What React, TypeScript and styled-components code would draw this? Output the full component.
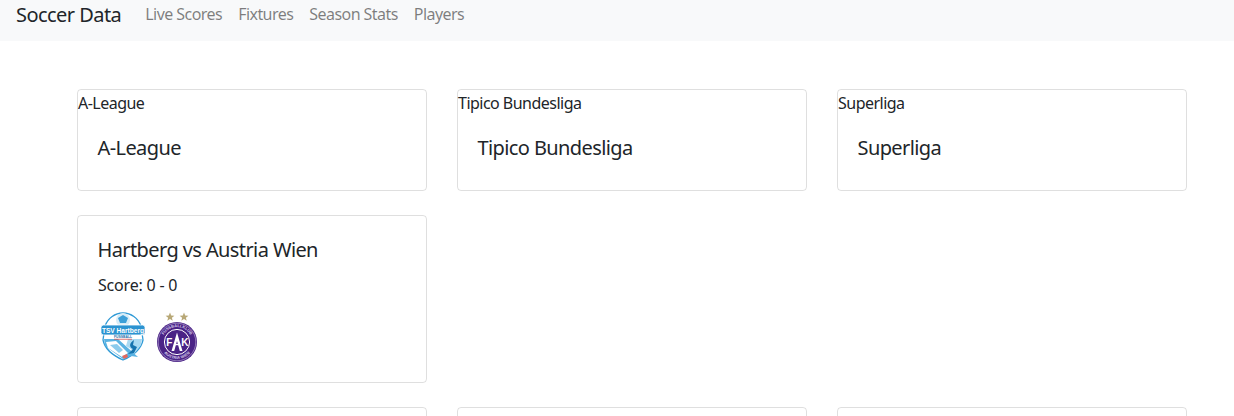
import styled, { createGlobalStyle } from "styled-components";

const GlobalStyle = createGlobalStyle`
  html, body {
    margin: 0;
    height: 416px;
    overflow: hidden;
    background: #fff;
    font-family: "Noto Sans", "Open Sans", sans-serif;
    font-size: 16px;
    line-height: 24px;
    color: #212529;
  }
  * { box-sizing: border-box; }
`;

const NavBar = styled.nav`
  height: 41px;
  background: #f8f9fa;
  padding: 0 16px;
  display: flex;
  align-items: flex-start;
`;

const Brand = styled.a`
  font-size: 20px;
  line-height: 30px;
  letter-spacing: -0.55px;
  margin-right: 16px;
  color: #212529;
`;

const NavLink = styled.a`
  padding: 0 8px;
  line-height: 29px;
  letter-spacing: -0.55px;
  color: rgba(0, 0, 0, 0.5);
`;

const Grid = styled.main`
  display: grid;
  grid-template-columns: repeat(3, 350px);
  column-gap: 30px;
  row-gap: 24px;
  padding: 48px 0 0 77px;
`;

const Card = styled.section`
  border: 1px solid rgba(0, 0, 0, 0.125);
  border-radius: 4px;
  min-height: 60px;
`;

const Filler = styled.div`
  grid-column: span 2;
`;

const AltText = styled.div`
  height: 24px;
  padding-top: 1px;
  letter-spacing: -0.52px;
`;

const CardBody = styled.div`
  padding: 20px;
`;

const CardTitle = styled.h5`
  height: 24px;
  margin: 0 0 12px -0.5px;
  padding-top: 2px;
  font-size: 20px;
  font-weight: 400;
  line-height: 24px;
  letter-spacing: -0.6px;
`;

const Score = styled.p`
  height: 24px;
  margin: 0 0 16px;
  padding-top: 1px;
  letter-spacing: -0.2px;
`;

const Logos = styled.div`
  display: flex;
  gap: 4px;
`;

const Crest = styled.svg`
  width: 50px;
  height: 50px;
  display: block;
`;

function HartbergCrest() {
  return (
    <Crest viewBox="0 0 50 50">
      <path d="M7 14 C10 6 17 1 25 1 C33 1 40 6 43 14 L45 28 C43 38 34 44 25 48 C16 44 7 38 5 28 Z" fill="#fff" stroke="#2f9ad6" strokeWidth="1.3" />
      <circle cx="25" cy="8" r="7" fill="#d7ecf7" />
      <path d="M25 3 L30 6 L28 11 L22 11 L20 6 Z" fill="#3c9fd8" />
      <path d="M6 27 L20 27 L40 45 L33 44 L25 47 L7 34 Z" fill="#59b2e2" />
      <path d="M8 30 L18 29 L30 41 L24 45 L10 36 Z" fill="#fff" />
      <path d="M12 33 L19 32 L25 38 L21 41 Z" fill="#8ccbec" />
      <path d="M30 27 L44 27 L43 33 L36 42 L33 37 L28 34 Z" fill="#a8d9f2" />
      <path d="M36 28 C31 31 31 35 35 37 L30 42 L36 41 L39 35 L35 33 Z" fill="#1673ae" />
      <path d="M24 44 L29 42 L30 45 L26 47 Z" fill="#e2685f" />
      <rect x="3" y="13" width="44" height="10" rx="2.5" fill="#2b93d1" stroke="#fff" strokeWidth="0.8" />
      <text x="25" y="20.6" fontFamily="Liberation Sans, sans-serif" fontSize="6.6" fontWeight="700" fill="#fff" textAnchor="middle">
        TSV Hartberg
      </text>
      <text x="25" y="26.4" fontFamily="Liberation Sans, sans-serif" fontSize="3.4" fontWeight="700" fill="#1d6fa8" textAnchor="middle">
        FUSSBALL
      </text>
      <rect x="16" y="26.8" width="18" height="0.8" fill="#d9534f" />
    </Crest>
  );
}

function AustriaCrest() {
  return (
    <Crest viewBox="0 0 50 50">
      <path d="M18 0.5 L19.2 3.5 L22.4 3.7 L19.9 5.7 L20.7 8.8 L18 7.1 L15.3 8.8 L16.1 5.7 L13.6 3.7 L16.8 3.5 Z" fill="#b8a877" />
      <path d="M32 0.5 L33.2 3.5 L36.4 3.7 L33.9 5.7 L34.7 8.8 L32 7.1 L29.3 8.8 L30.1 5.7 L27.6 3.7 L30.8 3.5 Z" fill="#b8a877" />
      <defs>
        <path id="fak-top" d="M10 30 A15 15 0 0 1 40 30" />
        <path id="fak-bottom" d="M8 30 A17 17 0 0 0 42 30" />
      </defs>
      <circle cx="25" cy="30" r="20" fill="#4a2386" />
      <circle cx="25" cy="30" r="18.8" fill="none" stroke="#d9cfea" strokeWidth="0.5" />
      <text fontFamily="Liberation Sans, sans-serif" fontSize="4" fontWeight="700" fill="#d8cdea" textAnchor="middle">
        <textPath href="#fak-top" startOffset="50%">FUSSBALLKLUB</textPath>
      </text>
      <text fontFamily="Liberation Sans, sans-serif" fontSize="4" fontWeight="700" fill="#d8cdea" textAnchor="middle">
        <textPath href="#fak-bottom" startOffset="50%">AUSTRIA WIEN</textPath>
      </text>
      <circle cx="25" cy="30" r="12.6" fill="#4a2386" stroke="#fff" strokeWidth="1" />
      <path d="M25 20.5 L30.5 39 H27.8 L25 29 L22.2 39 H19.5 Z" fill="#fff" />
      <rect x="22.5" y="32" width="5" height="1.2" fill="#fff" />
      <text x="17.4" y="34" fontFamily="Liberation Sans, sans-serif" fontSize="10" fontWeight="700" fill="#fff" textAnchor="middle">F</text>
      <text x="32.8" y="34" fontFamily="Liberation Sans, sans-serif" fontSize="10" fontWeight="700" fill="#fff" textAnchor="middle">K</text>
    </Crest>
  );
}

const leagues = ["A-League", "Tipico Bundesliga", "Superliga"];

export default function App() {
  return (
    <>
      <GlobalStyle />
      <NavBar>
        <Brand>Soccer Data</Brand>
        <NavLink>Live Scores</NavLink>
        <NavLink>Fixtures</NavLink>
        <NavLink>Season Stats</NavLink>
        <NavLink>Players</NavLink>
      </NavBar>
      <Grid>
        {leagues.map((name) => (
          <Card key={name}>
            <AltText>{name}</AltText>
            <CardBody>
              <CardTitle>{name}</CardTitle>
            </CardBody>
          </Card>
        ))}
        <Card>
          <CardBody>
            <CardTitle>Hartberg vs Austria Wien</CardTitle>
            <Score>Score: 0 - 0</Score>
            <Logos>
              <HartbergCrest />
              <AustriaCrest />
            </Logos>
          </CardBody>
        </Card>
        <Filler />
        <Card />
        <Card />
        <Card />
      </Grid>
    </>
  );
}
